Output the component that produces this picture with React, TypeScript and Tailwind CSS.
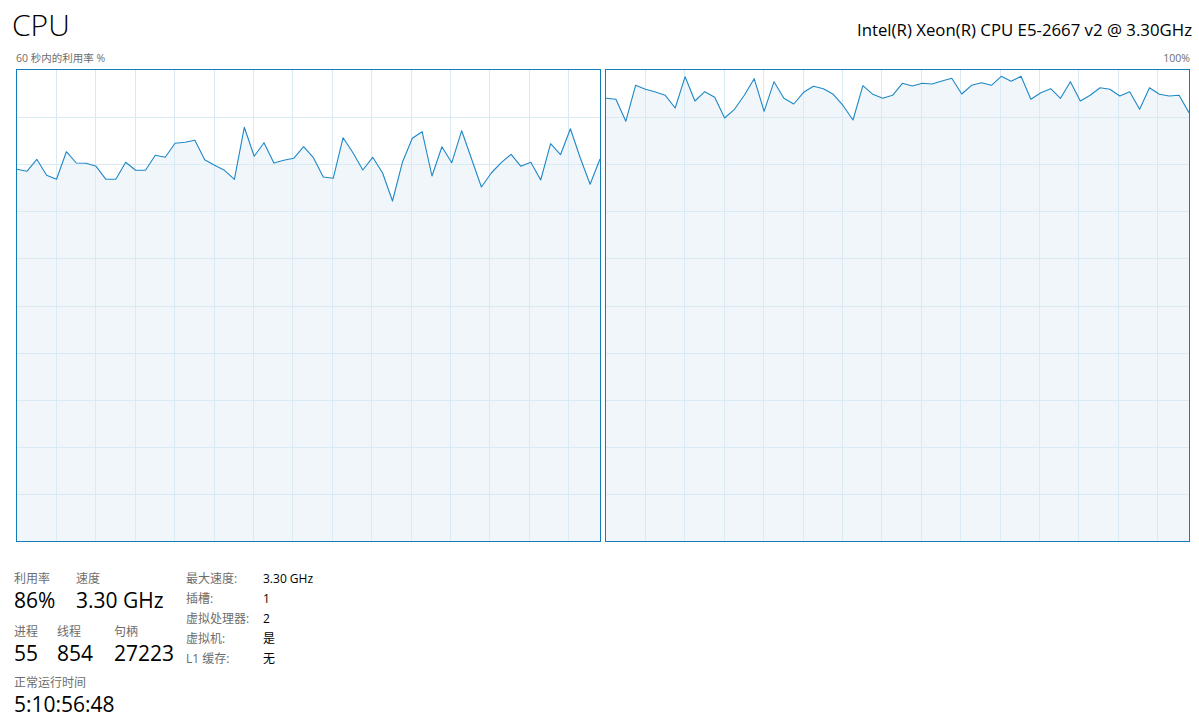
import React from "react";

const CHART_W = 583;
const CHART_H = 471;
const TOP = 70;

// sampled from the screenshot, page y coordinates, 60 points each
const LEFT_SERIES = [
  169.3, 171.3, 159.3, 175.3, 179.3, 151.7, 163, 163.3, 166.3, 179.3, 179.3, 162.3, 170.3, 170.3, 155.3,
  157.3, 143.3, 142.3, 140.3, 159.7, 165.3, 170.3, 179.3, 127.3, 156.3, 142.7, 163, 160.3, 158.3, 146.7,
  157.7, 177, 178.3, 137.7, 152.7, 170, 157.3, 173, 201, 162.3, 138.3, 131.7, 176, 146.7, 162.7, 130.7,
  158.7, 187, 173, 162.7, 154.3, 166.3, 162.3, 180, 143.7, 154.7, 128.7, 157.7, 184.3, 159
];

const RIGHT_SERIES = [
  98.3, 99.3, 121.3, 85.3, 89.3, 92, 95.3, 108, 76.7, 101, 91.7, 97.3, 118, 109.3, 95.3, 78.7, 111.3, 81.7,
  98.3, 104, 92.3, 86.3, 88.7, 94.3, 105.7, 120, 85.7, 94.3, 98.3, 95.3, 83.3, 86, 83.3, 84, 81, 78.3, 94,
  85.3, 82.7, 85.3, 76.3, 81.3, 76.3, 99.3, 92.7, 88.7, 98.3, 81.7, 101, 95.3, 87.7, 89.3, 96, 91.7, 109.3,
  87.7, 94.3, 96, 95.3, 112.7
];

const V_LINES = Array.from({ length: 14 }, (_, k) => Math.round(39 + 39.4 * k) + 0.5);
const H_LINES = Array.from({ length: 9 }, (_, k) => Math.round(47.1 * (k + 1)) + 0.5);

function UsageChart({ series }: { series: number[] }) {
  const step = CHART_W / (series.length - 1);
  const points = series.map((y, i) => `${(i * step).toFixed(1)},${(y - TOP).toFixed(1)}`);
  const line = points.join(" ");
  const area = `0,${CHART_H} ${line} ${CHART_W},${CHART_H}`;

  return (
    <div className="h-[473px] w-[585px] border border-[#117dbb] bg-white">
      <svg width={CHART_W} height={CHART_H} viewBox={`0 0 ${CHART_W} ${CHART_H}`} className="block">
        <polygon points={area} fill="#f1f6fa" />
        {V_LINES.map((x) => (
          <line key={`v${x}`} x1={x} y1={0} x2={x} y2={CHART_H} stroke="#d9eaf4" strokeWidth={1} />
        ))}
        {H_LINES.map((y) => (
          <line key={`h${y}`} x1={0} y1={y} x2={CHART_W} y2={y} stroke="#d9eaf4" strokeWidth={1} />
        ))}
        <polyline points={line} fill="none" stroke="#1e88c7" strokeWidth={1.1} strokeLinejoin="round" />
      </svg>
    </div>
  );
}

function Stat({ label, value, width }: { label: string; value: string; width: string }) {
  return (
    <div className={`flex flex-col ${width}`}>
      <span className="text-[12px] leading-[16px] text-[#6d6d6d]">{label}</span>
      <span className="text-[21px] leading-[26px] text-black">{value}</span>
    </div>
  );
}

const DETAILS = [
  ["最大速度:", "3.30 GHz"],
  ["插槽:", "1"],
  ["虚拟处理器:", "2"],
  ["虚拟机:", "是"],
  ["L1 缓存:", "无"]
];

export default function App() {
  return (
    <div
      className="h-[728px] w-[1199px] overflow-hidden bg-white text-black"
      style={{ fontFamily: '"Open Sans", "Noto Sans CJK SC", sans-serif' }}
    >
      <div className="flex h-[48px] items-baseline justify-between pl-[12px] pr-[7px] pt-[2px]">
        <span className="text-[30px] font-light leading-[46px]">CPU</span>
        <span className="text-[16.8px] leading-[46px]">Intel(R) Xeon(R) CPU E5-2667 v2 @ 3.30GHz</span>
      </div>
      <div className="flex h-[21px] items-center justify-between pl-[16px] pr-[9px] text-[10.5px] text-[#6d6d6d]">
        <span>60 秒内的利用率 %</span>
        <span>100%</span>
      </div>
      <div className="flex gap-[4px] pl-[16px]">
        <UsageChart series={LEFT_SERIES} />
        <UsageChart series={RIGHT_SERIES} />
      </div>
      <div className="flex items-start pl-[14px] pt-[29px]">
        <div className="flex w-[172px] flex-col">
          <div className="flex">
            <Stat label="利用率" value="86%" width="w-[62px]" />
            <Stat label="速度" value="3.30 GHz" width="w-[100px]" />
          </div>
          <div className="mt-[11px] flex">
            <Stat label="进程" value="55" width="w-[43px]" />
            <Stat label="线程" value="854" width="w-[57px]" />
            <Stat label="句柄" value="27223" width="w-[70px]" />
          </div>
          <div className="mt-[9px] flex">
            <Stat label="正常运行时间" value="5:10:56:48" width="w-[160px]" />
          </div>
        </div>
        <div className="grid grid-cols-[77px_auto] content-start gap-y-[4px] text-[12px] leading-[16px]">
          {DETAILS.map(([label, value]) => (
            <React.Fragment key={label}>
              <span className="text-[#6d6d6d]">{label}</span>
              <span className="text-black">{value}</span>
            </React.Fragment>
          ))}
        </div>
      </div>
    </div>
  );
}
